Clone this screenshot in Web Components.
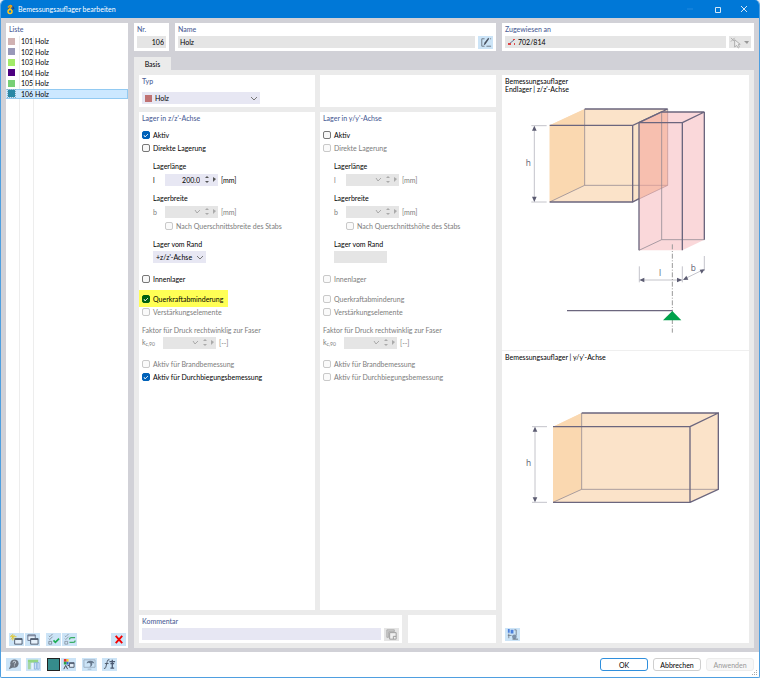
<!DOCTYPE html>
<html lang="de">
<head>
<meta charset="utf-8">
<title>Bemessungsauflager bearbeiten</title>
<style>
html, body { margin: 0; height: 100%; background: #e9eef3; }
body { font: 7px/8px Lato, "Open Sans", sans-serif; color: #000; }
</style>
</head>
<body>
<support-dialog></support-dialog>
<script>
const define = (name, css, html) => customElements.define(name, class extends HTMLElement {
  constructor() {
    super();
    const t = document.createElement('template');
    const body = typeof html === 'function' ? html(this) : html;
    t.innerHTML = `<style>*{box-sizing:border-box}button,input,select{font:inherit;color:inherit;margin:0;padding:0;border:0;border-radius:0}svg{display:block}${css}</style>${body}`;
    this.attachShadow({ mode: 'open' }).append(t.content.cloneNode(true));
  }
});

const icons = {
  edit: '<path d="M7 3H4v8h3M9 11h5" stroke="#6b7684" fill="none"/><path d="M6 10l1-3 4-5 1 1-4 6z" fill="#4a5260"/><path d="M13 3h1" stroke="#6b7684"/>',
  fresh: '<path d="M6 6h8v6H6z" fill="#e6f1fb" stroke="#4b566a"/><path d="M6 7h8" stroke="#4b566a"/><path d="M4 1v7M1 4h7M2 2l4 5M6 2L2 7" stroke="#e0c93a"/>',
  copy: '<path d="M3 2h8v6H3z" fill="#e6f1fb" stroke="#67728a"/><path d="M3 3h8" stroke="#67728a"/><path d="M6 6h8v6H6z" fill="#e6f1fb" stroke="#4b566a"/><path d="M6 7h8" stroke="#4b566a"/>',
  checkall: '<path d="M3 3l1 1 3-3M3 6l1 1 3-3M3 9h3v3H3z" stroke="#6f7884" stroke-width=".8" fill="none"/><path d="M8 8l2 2 4-4" stroke="#1fae55" stroke-width="1.8" fill="none"/>',
  swap: '<path d="M3 3l1 1 3-3M3 6l1 1 3-3M3 9h3v3H3z" stroke="#808a96" stroke-width=".8" fill="none"/><path d="M14 5h-4q-2 0-2 2M8 10h4q2 0 2-2" stroke="#3aae66" stroke-width="1.4" fill="none"/>',
  remove: '<path d="M5 3l7 8M12 3l-7 8" stroke="#f40000" stroke-width="2"/>',
  help: '<circle cx="9" cy="6" r="4.5" fill="#6d7681"/><path d="M5 7l-2 5 5-2z" fill="#6d7681"/><path d="M7.500 5q0-2 2-1.500t0 2.500l-.5 1M9 8v1" stroke="#dfe8f0" stroke-width=".9" fill="none"/>',
  units: '<path d="M2 2h11v3H2z" fill="#93d684"/><path d="M2 5h3v7H2z" fill="#a5d6a4"/><path d="M6 5h2v7H6z" fill="#e8f3fb"/><path d="M9 5h2v7H9zM12 5h2v7h-2z" fill="#dcecfb" stroke="#7fa9da" stroke-width=".8"/>',
  tree: '<path d="M3 1h3v3H3z" fill="#e33"/><path d="M6 1h2v3H6z" fill="#fc2"/><path d="M3 4h3v3H3z" fill="#2ca346"/><path d="M6 4h2v3H6z" fill="#36d"/><path d="M3 12l2-4 2 4M7 8h2" stroke="#3b4048" fill="none"/><path d="M9 5h5v5H9z" fill="#e6f1fb" stroke="#4b566a"/><path d="M9 6h5" stroke="#4b566a"/>',
  view: '<path d="M2 2h12v8H2zM6 12h4" fill="none" stroke="#9db0c2"/><path d="M5 6q0-3 4-3t4 3l-2-1v2q0 2-3 3l1-2V6L7 5z" fill="#66788c"/>',
  formula: '<path d="M8 2q-2-1-2.500 2L4 10q-.5 2-2 1M3 6h4" stroke="#4b5566" fill="none"/><path d="M8 4h6M9 11h4M11 2v9M9 6h4" stroke="#4b5a72" stroke-width="1.400"/>',
  note: '<path d="M3 2h8v2H5v6H3z" fill="#d0d0d0" stroke="#aaa"/><path d="M6 5h7v7H6z" fill="#f0f0f0" stroke="#999"/><path d="M10 12v-3h3" fill="none" stroke="#999"/>',
  render: '<path d="M3 1h2v4H3zM6 2h3v4H6z" fill="#4c80dc"/><path d="M4 6v5M3 8h4" stroke="#66707c" stroke-width=".8"/><path d="M10 2h2v6" stroke="#66707c" stroke-width=".8" fill="none"/><circle cx="10" cy="9.500" r="2.500" fill="#7e92aa"/><path d="M8 12h6" stroke="#66707c"/>',
  pick: '<path d="M2 2l4 4M6 2L2 6" stroke="#aaa"/><path d="M6 4v8l2-2 2 3 1-1-1-3h2z" fill="#eee" stroke="#aaa"/>',
};
const icon = n => `<svg width="15" height="13" viewBox="0 0 16 14" aria-hidden="true">${icons[n]}</svg>`;

define('tool-button', `
:host{display:block;flex:none;width:15px;height:13px}
:host([muted]) button{background:#e5e5e5}
button{display:block;width:100%;height:100%;background:#cce4f7}`,
  h => `<button type="button" aria-label="${h.getAttribute('label')}">${icon(h.getAttribute('icon'))}</button>`);

define('group-panel', `
:host{display:block;background:#fff;min-width:0;min-height:0;padding:0 3px}
h2{margin:0;font-size:7px;font-weight:500;line-height:13px;color:#4c6096}`,
  h => `${h.hasAttribute('heading') ? `<h2>${h.getAttribute('heading')}</h2>` : ''}<slot></slot>`);

define('title-bar', `
:host{display:flex;align-items:center;height:18px;background:#0078d7;color:#fff;padding:0 8px 0 5px;gap:3px}
h1{font:inherit;font-size:7px;margin:0;flex:1}
.app{width:9px;height:11px}
nav{display:flex;gap:13px}
button{width:14px;height:14px;background:none;display:grid;place-items:center}`,
  `<svg class="app" viewBox="0 0 18 22"><path d="M2 12L11 1l3 4-5 5z" fill="#4b5873"/><path d="M4 7q4-6 7-3L6 12" fill="none" stroke="#e9a51a" stroke-width="3"/><circle cx="8" cy="15" r="4" fill="none" stroke="#ffc61a" stroke-width="3"/><path d="M14 4l3 5-5 3z" fill="#2d456e"/></svg>
  <h1>Bemessungsauflager bearbeiten</h1>
  <nav>
   <button type="button" aria-label="Minimieren"><svg width="8" height="8"><path d="M1 4h6" stroke="#2289de"/></svg></button>
   <button type="button" aria-label="Maximieren"><svg width="7" height="7" viewBox="0 0 7 7"><path d="M1.500 1.500h5v5h-5z" fill="none" stroke="#d5e8f8"/></svg></button>
   <button type="button" aria-label="Schließen"><svg width="8" height="8"><path d="M1 1l6 6M7 1L1 7" stroke="#d5e8f8"/></svg></button>
  </nav>`);

define('support-list', `
:host{display:flex;flex-direction:column;background:#fff;min-height:0}
h2{margin:0;padding-left:3px;font-size:7px;font-weight:500;line-height:13px;color:#4c6096}
.area{flex:1;background:linear-gradient(90deg,transparent 13px,#ededed 13px 14px,transparent 14px 27px,#ededed 27px 28px,transparent 28px)}
ul{list-style:none;margin:0;padding:0;height:63px;display:flex;flex-direction:column}
li{flex:1;display:grid;grid-template-columns:15px 14px 1fr;align-items:center;border:1px solid transparent;border-left:0}
i{width:7px;height:7px;margin-left:2px;background:var(--c)}
.sel{background:#cce8ff;border-color:#92caf2}
.sel i{outline:1px dotted #8ab}
footer{display:flex;gap:1px;padding:0 2px 2px 3px}
.gap{margin-left:5px}.end{margin-left:auto}`,
  `<h2>Liste</h2><div class="area"><ul>${[['101', '#d0b2b2'], ['102', '#9898b8'], ['103', '#a2ea68'], ['104', '#4e0080'], ['105', '#78cf76'], ['106', '#2888a6']]
    .map(([n, c]) => `<li class="${n === '106' ? 'sel' : ''}" style="--c:${c}"><i></i><span>${n}</span><span>Holz</span></li>`).join('')}</ul></div>
  <footer><tool-button icon="fresh" label="Neu"></tool-button><tool-button icon="copy" label="Kopieren"></tool-button>
  <tool-button class="gap" icon="checkall" label="Alle auswählen"></tool-button><tool-button icon="swap" label="Auswahl umkehren"></tool-button>
  <tool-button class="end" icon="remove" label="Löschen"></tool-button></footer>`);

define('check-option', `
:host{display:block;height:13px}
label{position:relative;display:inline-flex;align-items:center;gap:3px;height:13px}
input{appearance:none;width:8px;height:8px;border:1px solid #777;border-radius:2px;background:#f7f7f7;flex:none}
input:checked{border-color:#0061b8;background:#0061b8}
:host([off]){color:#7c7c7c}
:host([off]) input{border-color:#c9c9c9;background:#fafafa}
:host([marked]){height:17px}
:host([marked]) label{background:#ffff55;height:17px;margin-left:-3px;padding:0 5px 0 3px}
:host([marked]) input{background:#00610f;border-color:#00610f}
svg{position:absolute;width:8px;height:8px;pointer-events:none}`,
  h => `<label><input type="checkbox" ${h.hasAttribute('on') ? 'checked' : ''} ${h.hasAttribute('off') ? 'disabled' : ''}>${h.hasAttribute('on') ? '<svg viewBox="0 0 8 8"><path d="M2 4l1 2 3-3" fill="none" stroke="#fff" stroke-width=".8"/></svg>' : ''}<span><slot></slot></span></label>`);

define('value-field', `
:host{display:flex;align-items:center;height:13px}
label{width:var(--sym,12px)}
sub{font-size:5px;line-height:5px;vertical-align:-1px}
.box{display:flex;align-items:center;width:53px;height:12px;background:#e7e7f3;padding-right:1px}
input{flex:1;min-width:0;height:12px;background:none;text-align:right}
.spin{display:grid;width:8px;margin-left:3px}
button{background:none;height:6px;display:grid;place-items:center}
.more{width:6px}
.unit{margin-left:3px}
:host([off]){color:#7c7c7c}
:host([off]) .box{background:#e5e5e5}
:host([off]) .spin{margin-left:0}
.chev{margin-right:2px}`,
  h => {
    const off = h.hasAttribute('off'), c = off ? '#aaa' : '#555', d = off ? 'disabled' : '';
    return `<label for="v">${h.getAttribute('sym')}</label><div class="box"><input id="v" value="${h.getAttribute('value') || ''}" ${d}>
    ${off ? '<svg class="chev" width="7" height="5"><path d="M1 1l2 3 3-3" fill="none" stroke="#aaa"/></svg>' : ''}
    <span class="spin"><button ${d} aria-label="Erhöhen"><svg width="4" height="3"><path d="M0 3l2-2 2 2z" fill="${c}"/></svg></button><button ${d} aria-label="Verringern"><svg width="4" height="3"><path d="M0 0l2 2 2-2z" fill="${c}"/></svg></button></span>
    <button class="more" ${d} aria-label="Weitere"><svg width="3" height="5"><path d="M0 0l3 2-3 3z" fill="${c}"/></svg></button></div><span class="unit">${h.getAttribute('unit')}</span>`;
  });

define('choice-box', `
:host{display:flex;align-items:center;height:12px;background:#e7e7f3;position:relative}
:host([off]){background:#e5e5e5}
i{width:7px;height:7px;background:#c07272;margin-left:3px;flex:none}
select{appearance:none;background:none;flex:1;min-width:0;height:12px;padding-left:3px;outline:0}
svg{position:absolute;right:3px;pointer-events:none}`,
  h => `${h.hasAttribute('swatch') ? '<i></i>' : ''}<select aria-label="${h.getAttribute('label')}" ${h.hasAttribute('off') ? 'disabled' : ''}><option>${h.getAttribute('value') || ''}</option></select>${h.hasAttribute('off') ? '' : '<svg width="6" height="5"><path d="M0 1l3 3 3-3" fill="none" stroke="#777"/></svg>'}`);

define('axis-form', `
:host{display:block;padding-top:3px}
.in{margin-left:11px}
p{margin:0;line-height:13px}
.block{margin-top:6px}
.deep{margin:1px 0 0 23px}
choice-box{width:53px}
.k{margin-top:6px;color:#7c7c7c}.k p{line-height:12px}
value-field.kc{--sym:21px}`,
  h => {
    const a = h.getAttribute('axis') === 'y', off = a ? 'off' : '';
    return `<check-option ${a ? '' : 'on'}>Aktiv</check-option><check-option ${off}>Direkte Lagerung</check-option>
    <div class="in block"><p>Lagerlänge</p><value-field sym="l" unit="[mm]" ${a ? 'off' : 'value="200.0"'}></value-field></div>
    <div class="in block"><p>Lagerbreite</p><value-field sym="b" unit="[mm]" off></value-field></div>
    <div class="deep"><check-option off>Nach Querschnitts${a ? 'höhe' : 'breite'} des Stabs</check-option></div>
    <div class="in block"><p>Lager vom Rand</p><choice-box label="Lager vom Rand" ${a ? 'off' : 'value="+z/z\'-Achse"'}></choice-box></div>
    <check-option style="margin-top:9px" ${off}>Innenlager</check-option>
    <check-option style="margin:${a ? '7px 0 0' : '5px 0 -2px'}" ${a ? 'off' : 'on marked'}>Querkraftabminderung</check-option>
    <check-option off>Verstärkungselemente</check-option>
    <div class="k"><p>Faktor für Druck rechtwinklig zur Faser</p><value-field class="kc" sym="k<sub>c,90</sub>" unit="[--]" off></value-field></div>
    <check-option style="margin-top:8px" off>Aktiv für Brandbemessung</check-option>
    <check-option ${a ? 'off' : 'on'}>Aktiv für Durchbiegungsbemessung</check-option>`;
  });

define('support-preview', `
:host{display:flex;flex-direction:column;background:#fff;min-height:0}
section{padding-top:2px}
.z{flex:none;border-bottom:1px solid #efefef;padding-bottom:1px}
.y{flex:1}
p{margin:0;padding-left:3px;line-height:8px}
.y p{line-height:9px}
svg{width:100%;height:auto}
tool-button{margin:0 0 2px 3px}
text{font-family:"Open Sans",sans-serif;font-size:25px;fill:#5a5a6e}
.s{stroke:#6b667e;stroke-width:4;fill:none}
.t{stroke:#8e8690;stroke-width:3;fill:none;opacity:.75}
.d{stroke:#a6a6b1;stroke-width:2;fill:none}
.a{fill:#5c5c72}`,
  `<section class="z"><p>Bemessungsauflager</p><p>Endlager | z/z'-Achse</p>
  <svg viewBox="6 67 741 768" role="img" aria-label="Endlager">
   <path d="M149 164L254 115H503V344L398 394H149z" fill="#fbe3c9"/><path d="M149 164l105-49v229l-105 50z" fill="#fad8b0"/>
   <path class="t" d="M149 394l105-50H503L398 394M254 115V344M503 115V344"/>
   <path class="s" d="M254 115H503L398 164V394H149M149 164H398M398 394l19-10"/>
   <path d="M417 156l68-32H613V507l-66 32H417z" fill="#f4a9ae" fill-opacity=".45"/>
   <path d="M417 156l68-32 18-2V344l-86 40z" fill="#f5a488" fill-opacity=".25"/>
   <path class="t" d="M485 124V507H613M485 507l-68 32"/>
   <path class="s" d="M417 539V156H547V539M417 156l68-32H613L547 156M613 124V507"/>
   <path class="d" d="M94 165h46M94 394h46M103 170v220M418 587v48M547 587v48M613 556v45M425 628h115M553 625l55-27"/>
   <path class="a" d="M103 165l-7 15h14zM103 394l-7-16h14zM418 628l15-7v14zM547 628l-16-7v14zM549 628l10-13 6 12zM614 596l-9 13-6-12z"/>
   <path d="M517 521V786" stroke="#999" stroke-width="3" stroke-dasharray="15 5 3 5"/>
   <path class="s" d="M201 720H517"/><path d="M517 721l-28 28h55z" fill="#00a14b"/>
   <text x="77" y="287">h</text><text x="477" y="615">l</text><text x="572" y="602">b</text></svg></section>
  <section class="y"><p>Bemessungsauflager | y/y'-Achse</p>
  <svg viewBox="6 66 741 480" role="img" aria-label="Auflager y/y">
   <path d="M159 260l86-41H655V448l-85 39H159z" fill="#fbe3c9"/><path d="M159 260l86-41V448l-86 39z" fill="#fad8b0"/>
   <path class="t" d="M245 219V448H655M245 448l-86 39"/>
   <path class="s" d="M159 260H570V487H159M245 219H655V448L570 487M570 260l85-41"/>
   <path class="d" d="M96 260h45M96 487h45M105 265v218"/><path class="a" d="M105 260l-7 15h14zM105 487l-7-15h14z"/>
   <text x="78" y="378">h</text></svg></section>
  <tool-button icon="render" label="Darstellung"></tool-button>`);

define('dialog-footer', `
:host{display:flex;align-items:center;height:25px;background:#fff;padding:0 5px;gap:5px;position:relative}
.teal{width:13px;height:13px;background:#368c8c;border:1px solid #222}
.pair{display:flex;gap:1px;padding:0 1px}
.sp{flex:1}
.cmds{display:flex;gap:5px}
.cmd{width:48px;height:13px;border:1px solid #cfcfcf;border-radius:3px;background:#fff}
.cmd.ok{border-color:#2f8fdd}
.cmd:disabled{background:#f7f7f7;border-color:#ececec;color:#999}
.grip{position:absolute;right:1px;bottom:1px}`,
  `<tool-button icon="help" label="Hilfe"></tool-button><tool-button icon="units" label="Einheiten"></tool-button>
  <div class="pair"><button class="teal" aria-label="Farbe"></button><tool-button icon="tree" label="Kategorien"></tool-button></div>
  <tool-button icon="view" label="Ansicht"></tool-button><tool-button icon="formula" label="Formel"></tool-button>
  <span class="sp"></span><div class="cmds"><button class="cmd ok">OK</button><button class="cmd">Abbrechen</button><button class="cmd" disabled>Anwenden</button></div>
  <svg class="grip" width="6" height="6"><path d="M4 0h1v1H4zM2 2h1v1H2zM4 2h1v1H4zM0 4h1v1H0zM2 4h1v1H2zM4 4h1v1H4z" fill="#aaa"/></svg>`);

define('support-dialog', `
:host{display:flex;flex-direction:column;height:100vh;box-sizing:border-box;border:solid #4f9fe0;border-width:0 1px 1px;border-radius:5px 5px 2px 2px;overflow:hidden}
.work{flex:1;min-height:0;display:grid;grid-template-columns:122px minmax(0,1fr);gap:6px;padding:5px 5px 4px;background:#d1d1d7}
main{display:flex;flex-direction:column;min-height:0}
.top{display:grid;grid-template-columns:35px minmax(0,1fr) 252px;gap:6px;height:28px}
.row{display:flex;gap:3px}
.row input{flex:1;min-width:0;height:12px;background:#e5e5e5;padding:0 2px}
.num input{text-align:right}
.assigned{display:flex;flex:1;min-width:0;align-items:center;background:#e5e5e5;padding-left:3px}
.drop{display:flex;width:22px;height:12px;background:#e5e5e5;align-items:center}
.tab{align-self:flex-start;width:37px;height:13px;margin-top:6px;background:#ebebeb}
.page{flex:1;min-height:0;display:grid;grid-template-columns:minmax(0,1fr) 247px;gap:6px;background:#ebebeb;padding:5px}
.cols{display:grid;grid-template-columns:minmax(0,1fr) minmax(0,1fr);grid-template-rows:32px minmax(0,1fr) 28px;gap:5px;min-height:0}
.bottom{grid-column:1/-1;display:grid;grid-template-columns:3fr 1fr;gap:6px}
.typ{width:118px;margin-top:4px}
.note input{background:#e7e7f3}`,
  `<title-bar></title-bar><div class="work"><support-list></support-list><main>
  <div class="top"><group-panel heading="Nr."><div class="row num"><input aria-label="Nr." value="106" readonly></div></group-panel>
  <group-panel heading="Name"><div class="row"><input aria-label="Name" value="Holz" readonly><tool-button icon="edit" label="Name bearbeiten"></tool-button></div></group-panel>
  <group-panel heading="Zugewiesen an"><div class="row"><div class="assigned"><svg width="8" height="8" viewBox="0 0 8 8"><path d="M1 6l5-4" stroke="#6a7c9a"/><path d="M0 5h3v2H0zM5 1h2v1H5zM6 5h1v2H6z" fill="#d44"/></svg><input aria-label="Zugewiesen an" value="702/814" readonly></div>
   <button class="drop" aria-label="Auswählen" disabled>${icon('pick')}<svg width="5" height="3"><path d="M0 0h5L3 3z" fill="#999"/></svg></button></div></group-panel></div>
  <button class="tab" role="tab" aria-selected="true">Basis</button>
  <div class="page"><div class="cols">
   <group-panel heading="Typ"><choice-box class="typ" swatch label="Typ" value="Holz"></choice-box></group-panel><group-panel></group-panel>
   <group-panel heading="Lager in z/z'-Achse"><axis-form axis="z"></axis-form></group-panel>
   <group-panel heading="Lager in y/y'-Achse"><axis-form axis="y"></axis-form></group-panel>
   <div class="bottom"><group-panel heading="Kommentar"><div class="row note"><input aria-label="Kommentar"><tool-button muted icon="note" label="Kommentar wählen"></tool-button></div></group-panel><group-panel></group-panel></div>
  </div><support-preview></support-preview></div></main></div><dialog-footer></dialog-footer>`);
</script>
</body>
</html>
